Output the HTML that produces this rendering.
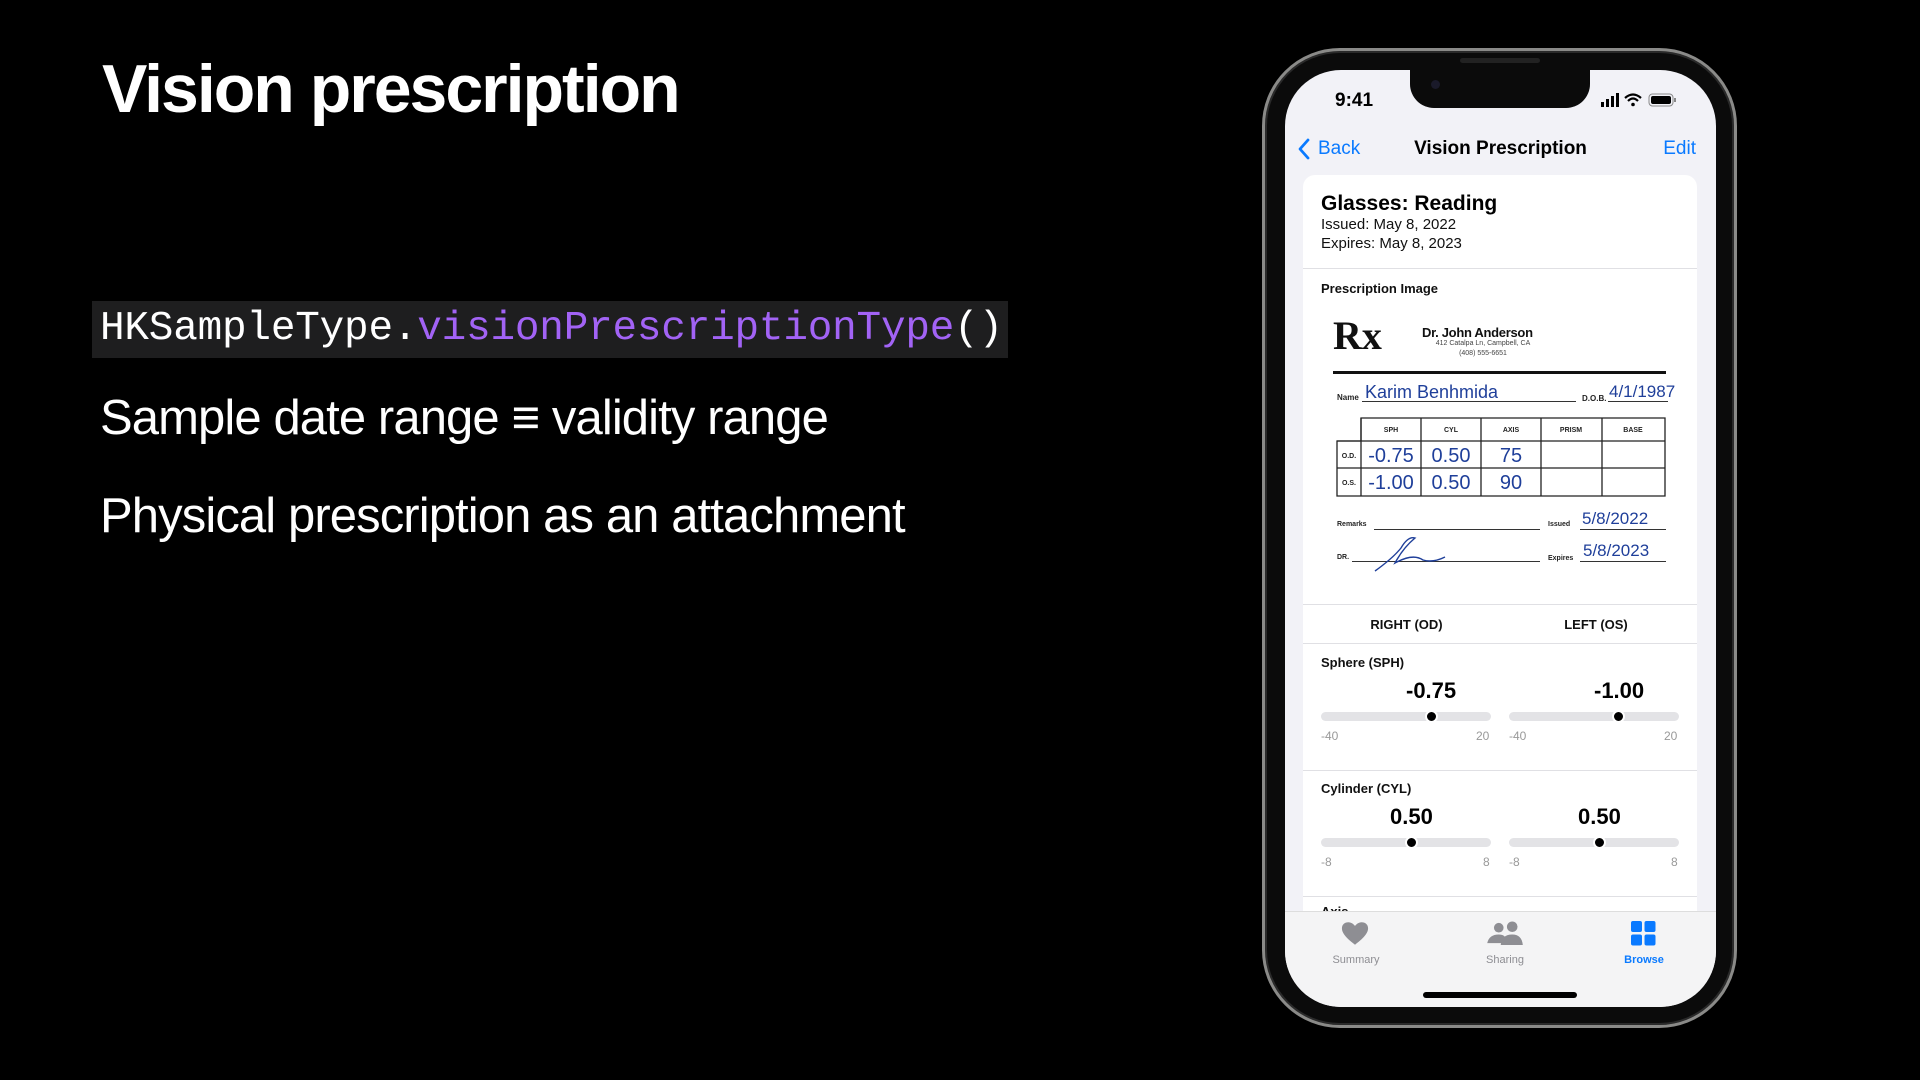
<!DOCTYPE html>
<html><head><meta charset="utf-8"><style>
*{margin:0;padding:0;box-sizing:border-box}
body{width:1920px;height:1080px;background:#000;position:relative;overflow:hidden;font-family:"Liberation Sans",sans-serif}
.a{position:absolute;white-space:nowrap}
.title{left:102px;top:50px;font-size:68px;font-weight:bold;color:#fff;letter-spacing:-2px}
.code{left:92px;top:301px;width:916px;height:57px;background:#1e1e1f}
.codet{left:100px;top:302px;font-family:"Liberation Mono",monospace;font-size:41px;color:#fff;line-height:54px;letter-spacing:-0.2px}
.codet span{color:#a263f5}
.b1{left:100px;top:390px;font-size:49px;color:#fff;letter-spacing:-0.9px}
.b2{left:100px;top:488px;font-size:49px;color:#fff;letter-spacing:-0.9px}
.phone{left:1262px;top:48px;width:475px;height:980px;border-radius:78px;background:#0b0b0b;border:3px solid #8a8a88;box-shadow:inset 0 0 0 2px #2a2a2a}
.screen{left:1285px;top:70px;width:431px;height:937px;border-radius:56px;background:#f2f2f7;overflow:hidden}
.notch{left:1410px;top:66px;width:180px;height:42px;background:#0b0b0b;border-radius:0 0 24px 24px}
.s{position:absolute;white-space:nowrap}
.card{position:absolute;left:18px;top:105px;width:394px;height:760px;background:#fff;border-radius:12px}
.sep{position:absolute;left:0;width:394px;height:1px;background:#e0e0e4}
.hw{color:#1f3f9a;font-family:"Liberation Sans",sans-serif}
.sm{font-size:8px;font-weight:bold;color:#222}
.trk{position:absolute;height:9px;background:#e3e3e6;border-radius:5px}
.dot{position:absolute;width:9px;height:9px;border-radius:50%;background:#000;border:2px solid #fff;box-sizing:content-box}
.lbl{font-size:12px;color:#999}
.val{font-size:22px;font-weight:bold;color:#000}
</style></head><body>
<div class="a title">Vision prescription</div>
<div class="a code"></div>
<div class="a codet">HKSampleType.<span>visionPrescriptionType</span>()</div>
<div class="a b1">Sample date range ≡ validity range</div>
<div class="a b2">Physical prescription as an attachment</div>

<div class="a phone"></div>
<div class="a screen">
 <div class="s" style="left:50px;top:20px;font-size:19px;font-weight:bold;color:#000">9:41</div>
 <svg class="s" style="left:316px;top:22px" width="90" height="16" viewBox="0 0 90 16">
  <rect x="0" y="10" width="3" height="5" fill="#000"/><rect x="5" y="7" width="3" height="8" fill="#000"/><rect x="10" y="4" width="3" height="11" fill="#000"/><rect x="15" y="1" width="3" height="14" fill="#000"/>
  <path d="M24 6 Q32 -1 40 6" stroke="#000" stroke-width="2.2" fill="none"/><path d="M27 9 Q32 4 37 9" stroke="#000" stroke-width="2.2" fill="none"/><circle cx="32" cy="12.5" r="1.8" fill="#000"/>
  <rect x="48" y="2" width="24" height="12" rx="3.5" fill="none" stroke="#888" stroke-width="1"/><rect x="50" y="4" width="20" height="8" rx="2" fill="#000"/><rect x="73" y="6" width="2" height="4" fill="#888"/>
 </svg>
 <svg class="s" style="left:12px;top:68px" width="14" height="22" viewBox="0 0 14 22"><path d="M11 2 L3 11 L11 20" stroke="#0a7aff" stroke-width="2.8" fill="none" stroke-linecap="round" stroke-linejoin="round"/></svg>
 <div class="s" style="left:33px;top:68px;font-size:19px;color:#0a7aff">Back</div>
 <div class="s" style="left:0;width:431px;text-align:center;top:68px;font-size:19px;font-weight:bold;color:#000">Vision Prescription</div>
 <div class="s" style="right:20px;top:68px;font-size:19px;color:#0a7aff">Edit</div>

 <div class="card">
  <div class="s" style="left:18px;top:17px;font-size:21px;font-weight:bold;color:#000">Glasses: Reading</div>
  <div class="s" style="left:18px;top:41px;font-size:15px;color:#111">Issued: May 8, 2022</div>
  <div class="s" style="left:18px;top:60px;font-size:15px;color:#111">Expires: May 8, 2023</div>
  <div class="sep" style="top:93px"></div>
  <div class="s" style="left:18px;top:106px;font-size:13px;font-weight:bold;color:#111">Prescription Image</div>
  <div class="s" style="left:30px;top:141px;font-size:40px;font-weight:bold;font-family:'Liberation Serif',serif;color:#111;line-height:40px">Rx</div>
  <div class="s" style="left:119px;top:150px;font-size:13px;font-weight:bold;color:#111;letter-spacing:-0.3px">Dr. John Anderson</div>
  <div class="s" style="left:110px;top:165px;width:140px;text-align:center;font-size:7px;color:#444">412 Catalpa Ln, Campbell, CA</div>
  <div class="s" style="left:110px;top:175px;width:140px;text-align:center;font-size:7px;color:#444">(408) 555-6651</div>
  <div class="s" style="left:30px;top:196px;width:333px;height:3px;background:#111"></div>
  <div class="s sm" style="left:34px;top:218px">Name</div>
  <div class="s" style="left:59px;top:226px;width:214px;height:1px;background:#333"></div>
  <div class="s hw" style="left:62px;top:207px;font-size:18px">Karim Benhmida</div>
  <div class="s sm" style="left:279px;top:219px">D.O.B.</div>
  <div class="s" style="left:305px;top:226px;width:60px;height:1px;background:#333"></div>
  <div class="s hw" style="left:306px;top:207px;font-size:17px">4/1/1987</div>
  <svg class="s" style="left:33px;top:242px" width="330" height="82" viewBox="0 0 330 82">
   <g stroke="#222" stroke-width="1.3" fill="none">
    <path d="M25 1 H329 V79 H1 V24 H25 Z"/>
    <path d="M1 24 H329 M1 51 H329 M25 1 V79 M85 1 V79 M145 1 V79 M205 1 V79 M266 1 V79"/>
   </g>
   <g font-family="Liberation Sans" font-size="7" font-weight="bold" fill="#222" text-anchor="middle">
    <text x="55" y="15">SPH</text><text x="115" y="15">CYL</text><text x="175" y="15">AXIS</text><text x="235" y="15">PRISM</text><text x="297" y="15">BASE</text>
    <text x="13" y="41">O.D.</text><text x="13" y="68">O.S.</text>
   </g>
   <g font-family="Liberation Sans" font-size="20" fill="#1f3f9a" text-anchor="middle">
    <text x="55" y="45">-0.75</text><text x="115" y="45">0.50</text><text x="175" y="45">75</text>
    <text x="55" y="72">-1.00</text><text x="115" y="72">0.50</text><text x="175" y="72">90</text>
   </g>
  </svg>
  <div class="s sm" style="left:34px;top:346px;font-size:7px">Remarks</div>
  <div class="s" style="left:71px;top:354px;width:166px;height:1px;background:#333"></div>
  <div class="s sm" style="left:245px;top:346px;font-size:7px">Issued</div>
  <div class="s" style="left:277px;top:354px;width:86px;height:1px;background:#333"></div>
  <div class="s hw" style="left:279px;top:334px;font-size:17px">5/8/2022</div>
  <div class="s sm" style="left:34px;top:379px;font-size:7px">DR.</div>
  <div class="s" style="left:49px;top:386px;width:188px;height:1px;background:#333"></div>
  <svg class="s" style="left:70px;top:358px" width="90" height="40" viewBox="0 0 90 40"><path d="M2 38 Q20 25 28 15 Q35 3 42 5 Q30 15 22 30 Q40 20 50 27 Q60 30 72 24" stroke="#1f3f9a" stroke-width="1.4" fill="none"/></svg>
  <div class="s sm" style="left:245px;top:380px;font-size:7px">Expires</div>
  <div class="s" style="left:277px;top:386px;width:86px;height:1px;background:#333"></div>
  <div class="s hw" style="left:280px;top:366px;font-size:17px">5/8/2023</div>

  <div class="sep" style="top:429px"></div>
  <div class="s" style="left:5px;width:197px;text-align:center;top:442px;font-size:13px;font-weight:bold;color:#111">RIGHT (OD)</div>
  <div class="s" style="left:202px;width:182px;text-align:center;top:442px;font-size:13px;font-weight:bold;color:#111">LEFT (OS)</div>
  <div class="sep" style="top:468px"></div>

  <div class="s" style="left:18px;top:480px;font-size:13px;font-weight:bold;color:#111">Sphere (SPH)</div>
  <div class="s val" style="left:103px;top:503px">-0.75</div>
  <div class="s val" style="left:291px;top:503px">-1.00</div>
  <div class="trk" style="left:18px;top:537px;width:170px"></div>
  <div class="trk" style="left:206px;top:537px;width:170px"></div>
  <div class="dot" style="left:122px;top:535px"></div>
  <div class="dot" style="left:309px;top:535px"></div>
  <div class="s lbl" style="left:18px;top:554px">-40</div>
  <div class="s lbl" style="left:173px;top:554px">20</div>
  <div class="s lbl" style="left:206px;top:554px">-40</div>
  <div class="s lbl" style="left:361px;top:554px">20</div>
  <div class="sep" style="top:595px"></div>

  <div class="s" style="left:18px;top:606px;font-size:13px;font-weight:bold;color:#111">Cylinder (CYL)</div>
  <div class="s val" style="left:87px;top:629px">0.50</div>
  <div class="s val" style="left:275px;top:629px">0.50</div>
  <div class="trk" style="left:18px;top:663px;width:170px"></div>
  <div class="trk" style="left:206px;top:663px;width:170px"></div>
  <div class="dot" style="left:102px;top:661px"></div>
  <div class="dot" style="left:290px;top:661px"></div>
  <div class="s lbl" style="left:18px;top:680px">-8</div>
  <div class="s lbl" style="left:180px;top:680px">8</div>
  <div class="s lbl" style="left:206px;top:680px">-8</div>
  <div class="s lbl" style="left:368px;top:680px">8</div>
  <div class="sep" style="top:721px"></div>
  <div class="s" style="left:18px;top:729px;font-size:13px;font-weight:bold;color:#111">Axis</div>
 </div>

 <div class="s" style="left:0;top:841px;width:431px;height:96px;background:#f4f4f5;border-top:1px solid #ddd"></div>
 <svg class="s" style="left:56px;top:851px" width="28" height="25" viewBox="0 0 30 26"><path d="M15 25 C3 16 1 11 1 7.5 C1 3.5 4 1 8 1 C11 1 13.5 3 15 5 C16.5 3 19 1 22 1 C26 1 29 3.5 29 7.5 C29 11 27 16 15 25Z" fill="#8e8e93"/></svg>
 <div class="s" style="left:0;width:142px;text-align:center;top:884px;font-size:11px;color:#8e8e93">Summary</div>
 <svg class="s" style="left:202px;top:851px" width="37" height="25" viewBox="0 0 38 26"><circle cx="12" cy="7" r="5" fill="#8e8e93"/><circle cx="26" cy="6" r="5.5" fill="#8e8e93"/><path d="M0 23 Q2 14 12 14 Q19 14 20 20 L20 23Z" fill="#8e8e93"/><path d="M14 25 Q15 14 26 14 Q36 14 37 25Z" fill="#8e8e93"/></svg>
 <div class="s" style="left:148px;width:144px;text-align:center;top:884px;font-size:11px;color:#8e8e93">Sharing</div>
 <svg class="s" style="left:346px;top:851px" width="25" height="25" viewBox="0 0 25 25"><rect x="0" y="0" width="11" height="11" rx="2" fill="#0a7aff"/><rect x="13.5" y="0" width="11" height="11" rx="2" fill="#0a7aff"/><rect x="0" y="13.5" width="11" height="11" rx="2" fill="#0a7aff"/><rect x="13.5" y="13.5" width="11" height="11" rx="2" fill="#0a7aff"/></svg>
 <div class="s" style="left:286px;width:146px;text-align:center;top:884px;font-size:11px;font-weight:bold;color:#0a7aff">Browse</div>
 <div class="s" style="left:138px;top:922px;width:154px;height:6px;border-radius:3px;background:#000"></div>
</div>
<div class="a notch"></div>
<div class="a" style="left:1460px;top:58px;width:80px;height:5px;border-radius:3px;background:#222"></div>
<div class="a" style="left:1431px;top:80px;width:9px;height:9px;border-radius:50%;background:#1a1a2a"></div>
</body></html>
